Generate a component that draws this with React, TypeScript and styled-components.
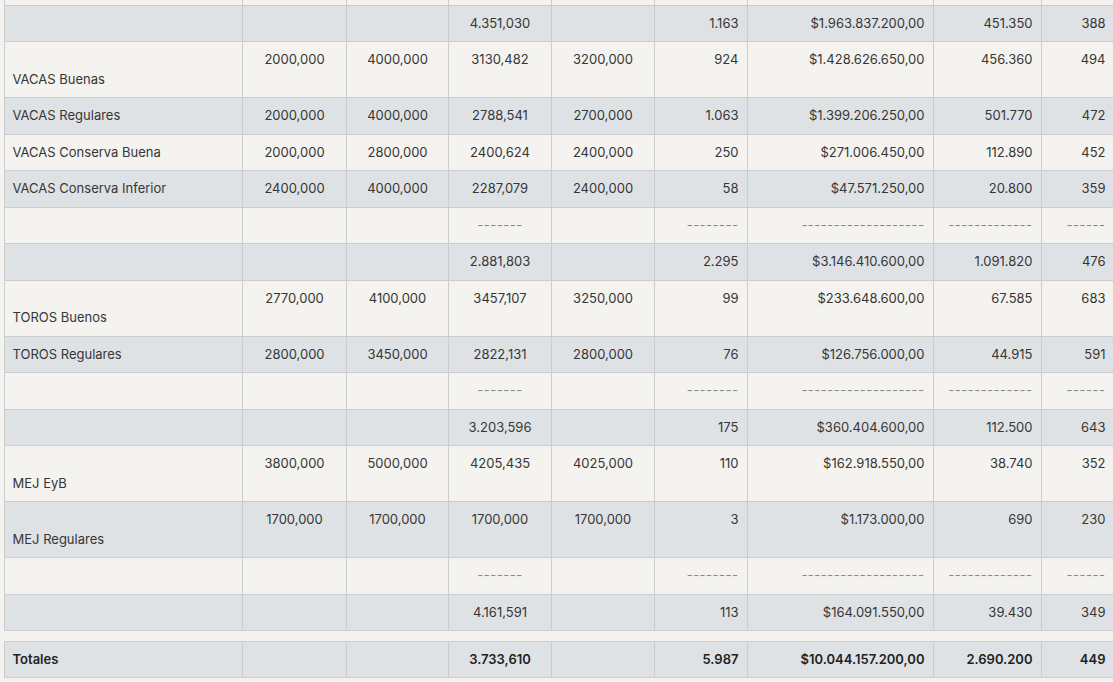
import React from 'react';
import styled, { createGlobalStyle } from 'styled-components';

const GlobalStyle = createGlobalStyle`
  html, body {
    margin: 0;
    padding: 0;
    overflow: hidden;
    background: #f4f3ef;
  }
  body {
    font-family: Inter, "Noto Sans", "Liberation Sans", sans-serif;
    color: #333;
  }
`;

const Page = styled.div`
  padding-left: 4px;
  width: 1120px;
`;

const Table = styled.table<{ $first?: boolean }>`
  border-collapse: collapse;
  table-layout: fixed;
  width: 1110px;
  font-size: 13px;
  line-height: 1.5;
  margin-top: ${(p) => (p.$first ? '-32px' : '9.5px')};
`;

const Row = styled.tr<{ $shade: boolean }>`
  background: ${(p) => (p.$shade ? '#dfe2e5' : '#f4f3ef')};
`;

const Cell = styled.td<{ $align: 'left' | 'center' | 'right'; $bold?: boolean; $dash?: boolean }>`
  border: 1px solid #cbcccd;
  padding: 8px ${(p) => (p.$align === 'right' ? '8.5px' : '8px')} 8px
    ${(p) => (p.$align === 'left' ? '7.5px' : '8px')};
  vertical-align: top;
  text-align: ${(p) => p.$align};
  white-space: nowrap;
  overflow: hidden;
  font-weight: ${(p) => (p.$bold ? 600 : 400)};
  color: ${(p) => (p.$dash ? '#8a8a8a' : p.$bold ? '#222' : '#363636')};
  letter-spacing: ${(p) => (p.$dash ? '0.5px' : '0')};
`;

const widths = [238, 104, 102, 103, 103, 93, 186, 108, 73];
const aligns: ('left' | 'center' | 'right')[] = [
  'left', 'center', 'center', 'center', 'center', 'right', 'right', 'right', 'right',
];

type RowData = { cells: string[]; tall?: boolean; dash?: boolean };

const blank: RowData = { cells: ['', '', '', '', '', '', '', '', ''] };

const dashes: RowData = {
  dash: true,
  cells: ['', '', '', '-------', '', '--------', '-------------------', '-------------', '------'],
};

const sum = (a: string, b: string, c: string, d: string, e: string): RowData => ({
  cells: ['', '', '', a, '', b, c, d, e],
});

// first row sits mostly above the top edge, only its lower border strip shows
const rows: RowData[] = [
  blank,
  sum('4.351,030', '1.163', '$1.963.837.200,00', '451.350', '388'),
  { tall: true, cells: ['VACAS Buenas', '2000,000', '4000,000', '3130,482', '3200,000', '924', '$1.428.626.650,00', '456.360', '494'] },
  { cells: ['VACAS Regulares', '2000,000', '4000,000', '2788,541', '2700,000', '1.063', '$1.399.206.250,00', '501.770', '472'] },
  { cells: ['VACAS Conserva Buena', '2000,000', '2800,000', '2400,624', '2400,000', '250', '$271.006.450,00', '112.890', '452'] },
  { cells: ['VACAS Conserva Inferior', '2400,000', '4000,000', '2287,079', '2400,000', '58', '$47.571.250,00', '20.800', '359'] },
  dashes,
  sum('2.881,803', '2.295', '$3.146.410.600,00', '1.091.820', '476'),
  { tall: true, cells: ['TOROS Buenos', '2770,000', '4100,000', '3457,107', '3250,000', '99', '$233.648.600,00', '67.585', '683'] },
  { cells: ['TOROS Regulares', '2800,000', '3450,000', '2822,131', '2800,000', '76', '$126.756.000,00', '44.915', '591'] },
  dashes,
  sum('3.203,596', '175', '$360.404.600,00', '112.500', '643'),
  { tall: true, cells: ['MEJ EyB', '3800,000', '5000,000', '4205,435', '4025,000', '110', '$162.918.550,00', '38.740', '352'] },
  { tall: true, cells: ['MEJ Regulares', '1700,000', '1700,000', '1700,000', '1700,000', '3', '$1.173.000,00', '690', '230'] },
  dashes,
  sum('4.161,591', '113', '$164.091.550,00', '39.430', '349'),
];

const totals = ['Totales', '', '', '3.733,610', '', '5.987', '$10.044.157.200,00', '2.690.200', '449'];

function Cols() {
  return (
    <colgroup>
      {widths.map((w, i) => (
        <col key={i} style={{ width: w }} />
      ))}
    </colgroup>
  );
}

export default function App() {
  return (
    <Page>
      <GlobalStyle />
      <Table $first>
        <Cols />
        <tbody>
          {rows.map((r, i) => (
            <Row key={i} $shade={i % 2 === 1}>
              {r.cells.map((c, j) => (
                <Cell key={j} $align={aligns[j]} $dash={r.dash}>
                  {j === 0 && r.tall ? (
                    <>
                      <br />
                      {c}
                    </>
                  ) : (
                    c || '\u00a0'
                  )}
                </Cell>
              ))}
            </Row>
          ))}
        </tbody>
      </Table>
      <Table>
        <Cols />
        <tbody>
          <Row $shade>
            {totals.map((c, j) => (
              <Cell key={j} $align={aligns[j]} $bold>
                {c}
              </Cell>
            ))}
          </Row>
        </tbody>
      </Table>
    </Page>
  );
}
